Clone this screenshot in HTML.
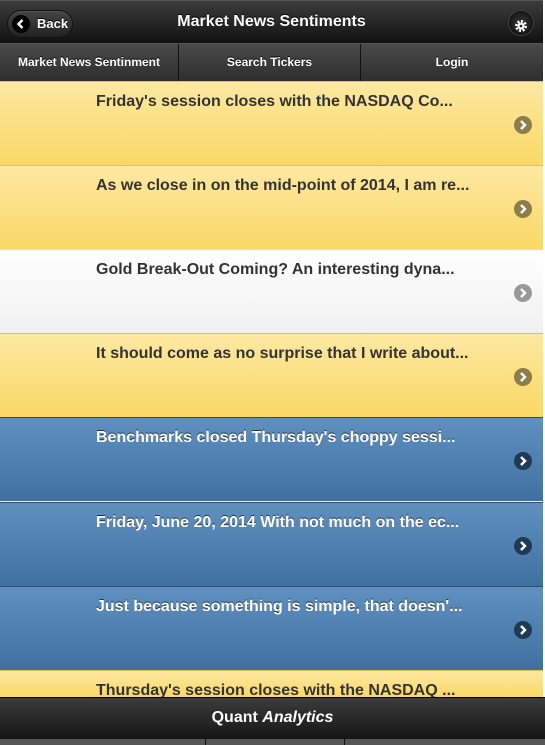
<!DOCTYPE html>
<html style="width:545px;height:745px;overflow:hidden"><head><style>
*{margin:0;padding:0;box-sizing:border-box}
body{width:545px;height:745px;overflow:hidden;background:#fff;font-family:"Liberation Sans",Arial,sans-serif;font-weight:bold;position:relative}
.hdr{position:absolute;left:0;top:0;width:543px;height:43px;background:linear-gradient(#3c3c3c,#111);border-top:1px solid #555;color:#fff;text-align:center;font-size:16px;line-height:42px;text-shadow:0 -1px 0 #000}
.back{position:absolute;left:7px;top:9px;width:66px;height:28px;border-radius:14px;background:linear-gradient(#444,#222);border:1px solid #111;box-shadow:inset 0 1px 0 #555;font-size:13px;line-height:26px;text-align:left;padding-left:29px}
.back i,.gear{position:absolute;width:18px;height:18px;border-radius:50%;background:#000}
.back i{left:4px;top:4px}
.gear{right:10px;top:10px;width:24px;height:24px;border:1px solid #111;background:radial-gradient(#333,#111);box-shadow:0 0 0 1px #444}
.nav{position:absolute;left:0;top:43px;width:543px;height:38px;display:flex;background:linear-gradient(#4a4a4a,#2e2e2e);border-top:1px solid #555}
.nav div{color:#fff;font-size:12px;text-align:center;line-height:36px;border-right:1px solid #111;text-shadow:0 -1px 0 #000}
.item{position:absolute;left:0;width:543px;height:84px;border-top:1px solid #e5c050;padding:11px 0 0 96px;font-size:16px;color:#333;white-space:nowrap}
.y{background:linear-gradient(#fde8a2,#f9d865)}
.w{background:linear-gradient(#fff,#f0f0f0);border-top-color:#ddd}
.b{background:linear-gradient(#6090c0,#40709f);color:#fff;border-top-color:#2a4c70;text-shadow:0 -1px 0 #234}
.ar{position:absolute;right:11px;top:34px;width:18px;height:18px;border-radius:50%}
.y .ar{background:#8e7d48}.w .ar{background:#999}.b .ar{background:#1f3a55}
.ar svg{position:absolute;left:0;top:0}
.ftr{position:absolute;left:0;top:697px;width:545px;height:42px;background:linear-gradient(#3c3c3c,#151515);color:#fff;text-align:center;font-size:16px;line-height:40px;border-top:1px solid #000}
.bot{position:absolute;left:0;top:739px;width:545px;height:6px;background:#555}
</style></head><body>
<div class="item y" style="top:81px">Friday's session closes with the NASDAQ Co...<span class="ar"><svg width="18" height="18"><path d="M7 5l4 4-4 4" stroke="#fff" stroke-width="2.5" fill="none"/></svg></span></div>
<div class="item y" style="top:165px">As we close in on the mid-point of 2014, I am re...<span class="ar"><svg width="18" height="18"><path d="M7 5l4 4-4 4" stroke="#fff" stroke-width="2.5" fill="none"/></svg></span></div>
<div class="item w" style="top:249px">Gold Break-Out Coming? An interesting dyna...<span class="ar"><svg width="18" height="18"><path d="M7 5l4 4-4 4" stroke="#fff" stroke-width="2.5" fill="none"/></svg></span></div>
<div class="item y" style="top:333px">It should come as no surprise that I write about...<span class="ar"><svg width="18" height="18"><path d="M7 5l4 4-4 4" stroke="#fff" stroke-width="2.5" fill="none"/></svg></span></div>
<div class="item b" style="top:417px">Benchmarks closed Thursday's choppy sessi...<span class="ar"><svg width="18" height="18"><path d="M7 5l4 4-4 4" stroke="#fff" stroke-width="2.5" fill="none"/></svg></span></div>
<div class="item b" style="top:502px">Friday, June 20, 2014 With not much on the ec...<span class="ar"><svg width="18" height="18"><path d="M7 5l4 4-4 4" stroke="#fff" stroke-width="2.5" fill="none"/></svg></span></div>
<div class="item b" style="top:586px">Just because something is simple, that doesn'...<span class="ar"><svg width="18" height="18"><path d="M7 5l4 4-4 4" stroke="#fff" stroke-width="2.5" fill="none"/></svg></span></div>
<div class="item y" style="top:670px;height:27px;overflow:hidden">Thursday's session closes with the NASDAQ ...</div>
<div class="hdr">Market News Sentiments
<div class="back"><i><svg width="18" height="18"><path d="M10.5 5l-4 4 4 4" stroke="#fff" stroke-width="2.5" fill="none"/></svg></i>Back</div>
<div class="gear"><svg width="22" height="22" viewBox="0 0 22 22"><circle cx="11" cy="11" r="4.5" fill="none" stroke="#fff" stroke-width="3" stroke-dasharray="2 1.5"/><circle cx="11" cy="11" r="3.5" fill="#fff"/><circle cx="11" cy="11" r="1.3" fill="#222"/></svg></div>
</div>
<div class="nav"><div style="width:179px">Market News Sentinment</div><div style="width:182px">Search Tickers</div><div style="width:182px;border:0">Login</div></div>
<div class="ftr">Quant <i>Analytics</i></div>
<div class="bot"><div style="position:absolute;left:205px;top:0;width:1px;height:6px;background:#111"></div><div style="position:absolute;left:344px;top:0;width:1px;height:6px;background:#111"></div></div>
</body></html>
